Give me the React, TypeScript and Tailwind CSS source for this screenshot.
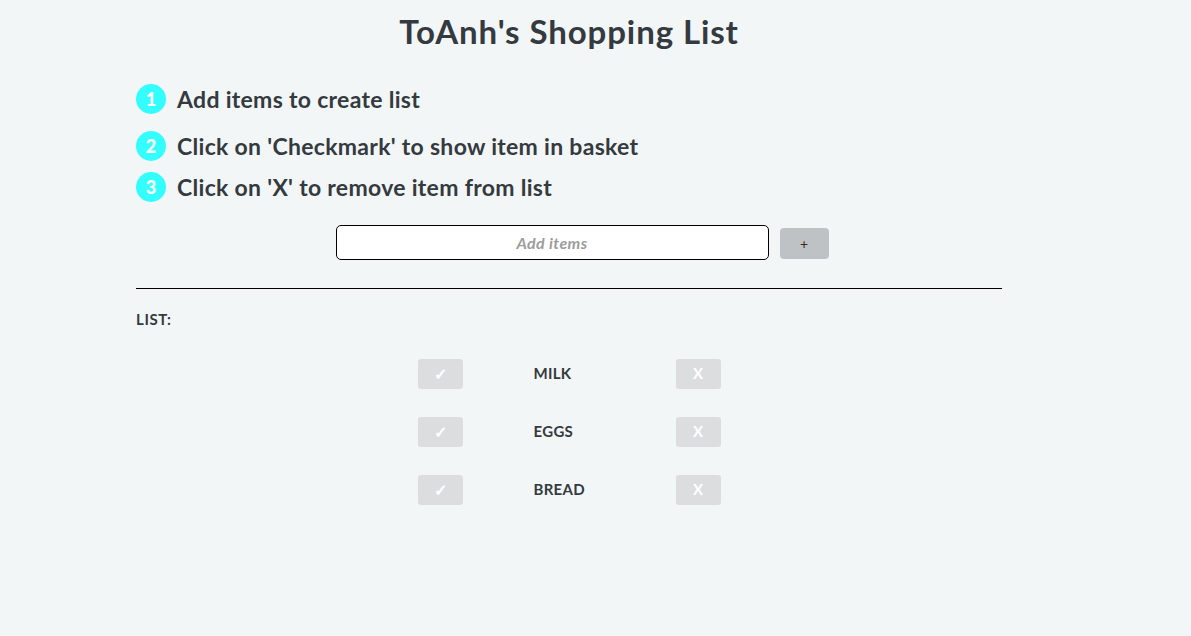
const steps = [
  { n: 1, text: "Add items to create list", mt: "mt-0" },
  { n: 2, text: "Click on 'Checkmark' to show item in basket", mt: "mt-[17px]" },
  { n: 3, text: "Click on 'X' to remove item from list", mt: "mt-[11px]" },
];

const items = ["MILK", "EGGS", "BREAD"];

export default function App() {
  return (
    <div
      className="min-h-[636px] w-full bg-[#f3f6f7] text-[#343a40]"
      style={{ fontFamily: "Lato, 'Open Sans', sans-serif" }}
    >
      <div className="ml-[136px] w-[866px] pt-[10px]">
        <h1 className="text-center text-[33px] font-bold leading-[42px] tracking-[0.9px]">
          ToAnh's Shopping List
        </h1>

        <div className="mt-[32px] flex flex-col">
          {steps.map((s) => (
            <div key={s.n} className={`flex items-center gap-[11px] ${s.mt}`}>
              <span className="flex size-[30px] items-center justify-center rounded-full bg-[#33ffff] text-[18px] font-black text-white">
                {s.n}
              </span>
              <span className="text-[23px] font-bold leading-[30px] tracking-[0.3px]">
                {s.text}
              </span>
            </div>
          ))}
        </div>

        <div className="mt-[23px] flex items-center justify-center gap-[11px] pl-[26px]">
          <input
            placeholder="Add items"
            className="h-[35px] w-[433px] rounded-[5px] border border-black bg-white text-center text-[16px] font-bold italic tracking-[0.4px] placeholder:text-[#9c9c9c]"
          />
          <button className="mt-[2px] h-[31px] w-[49px] rounded-[4px] bg-[#bfc2c4] text-[14px] text-[#3a2a1a]">
            +
          </button>
        </div>

        <hr className="mt-[28px] border-t border-black" />

        <div className="mt-[19px] text-[15px] font-bold tracking-[0.6px]">LIST:</div>

        <div className="mt-[28px] flex flex-col items-center gap-[28px]">
          {items.map((item) => (
            <div key={item} className="flex items-center">
              <button className="flex h-[30px] w-[45px] items-center justify-center rounded-[3px] bg-[#dcdddf] text-[16px] font-black text-white">
                ✓
              </button>
              <span className="ml-[71px] w-[142px] text-[15px] font-bold tracking-[0.3px]">
                {item}
              </span>
              <button className="flex h-[30px] w-[45px] items-center justify-center rounded-[3px] bg-[#dcdddf] text-[15px] font-bold text-white">
                X
              </button>
            </div>
          ))}
        </div>
      </div>
    </div>
  );
}
